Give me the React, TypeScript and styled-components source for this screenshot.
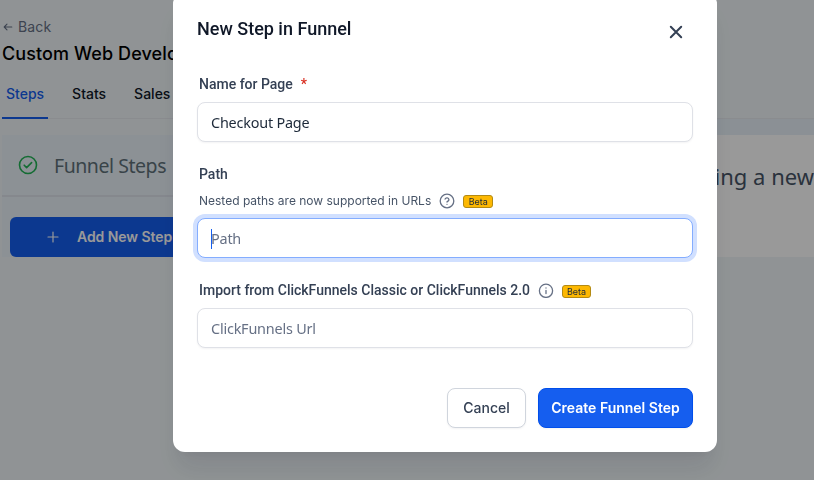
import React from "react";
import styled, { createGlobalStyle } from "styled-components";

const Global = createGlobalStyle`
  * { box-sizing: border-box; }
  html, body { margin: 0; height: 480px; overflow: hidden; background: #f0f7fa; }
  #root { height: 480px; }
`;

const Page = styled.div`
  height: 480px;
  display: flex;
  flex-direction: column;
  overflow: hidden;
  background: #f0f6f9;
  font-family: Inter, "Liberation Sans", sans-serif;
`;

const Header = styled.header`
  height: 119px;
  flex: none;
  padding: 17px 0 0 2px;
  display: flex;
  flex-direction: column;
`;

const Back = styled.a`
  height: 20px;
  display: flex;
  align-items: center;
  gap: 4px;
  color: #667085;
  font-size: 14px;
  line-height: 20px;
  letter-spacing: 0.15px;
`;

const FunnelName = styled.h1`
  margin: 3px 0 0;
  height: 28px;
  line-height: 28px;
  font-size: 18px;
  font-weight: 450;
  letter-spacing: 0.1px;
  white-space: nowrap;
  color: #000;
`;

const Tabs = styled.nav`
  margin-top: 13px;
  height: 38px;
  display: flex;
  gap: 20px;
  box-shadow: inset 0 -1px #e6e9ef;
`;

const Tab = styled.a<{ $active?: boolean }>`
  height: 38px;
  padding: 3px 4px 0;
  font-size: 14px;
  line-height: 20px;
  font-weight: 500;
  color: ${(p) => (p.$active ? "#155eef" : "#101828")};
  border-bottom: 2px solid ${(p) => (p.$active ? "#155eef" : "transparent")};
`;

const Workspace = styled.main`
  height: 138px;
  padding: 16px 0 0 2px;
  display: flex;
  gap: 12px;
  background: linear-gradient(90deg, #f0f6f9 50%, #e8f1f8 60%);
`;

const StepsPanel = styled.aside`
  width: 260px;
  height: 122px;
  background: #e9f2f9;
`;

const StepsTitle = styled.div`
  height: 62px;
  padding: 0 0 0 16px;
  display: flex;
  align-items: center;
  gap: 16px;
  border-bottom: 2px solid #dee3ec;
  color: #607179;
  font-family: "Noto Sans", sans-serif;
  font-size: 19.5px;
  letter-spacing: -0.45px;
  white-space: nowrap;
`;

const AddButton = styled.button`
  margin: 20px 0 0 8px;
  width: 244px;
  height: 40px;
  padding: 0 0 0 36px;
  display: flex;
  align-items: center;
  gap: 17px;
  border: 0;
  border-radius: 6px;
  background: #155eef;
  color: #fff;
  font: 600 14px/20px Inter, sans-serif;
  letter-spacing: -0.05px;
`;

const Canvas = styled.section`
  flex: 1;
  height: 122px;
  padding-top: 26px;
  overflow: hidden;
  display: flex;
  justify-content: flex-end;
  background: #fff;
  color: #475467;
  font: 22px/30px "Noto Sans", sans-serif;
  white-space: nowrap;
`;

const Scrim = styled.div`
  position: fixed;
  inset: 0;
  background: rgba(0, 0, 0, 0.4);
`;

const Dialog = styled.div`
  position: absolute;
  left: 173px;
  top: -8px;
  width: 544px;
  height: 460px;
  padding: 24px;
  display: flex;
  flex-direction: column;
  border-radius: 12px;
  background: #fff;
  color: #344054;
  font-family: Roboto, sans-serif;
  box-shadow: 0 20px 24px -4px rgba(16, 24, 40, 0.1), 0 8px 8px -4px rgba(16, 24, 40, 0.04);
`;

const DialogHead = styled.header`
  height: 48px;
  display: flex;
  justify-content: space-between;
`;

const DialogTitle = styled.h2`
  margin: 0;
  font-size: 18px;
  line-height: 26px;
  font-weight: 500;
  color: #101828;
`;

const CloseButton = styled.button`
  width: 34px;
  height: 32px;
  padding: 0;
  display: flex;
  align-items: center;
  justify-content: center;
  border: 0;
  background: none;
`;

const Label = styled.label<{ $top?: number }>`
  margin-top: ${(p) => p.$top ?? 0}px;
  height: 20px;
  padding-left: 2px;
  display: flex;
  align-items: center;
  gap: 8px;
  font-size: 14px;
  line-height: 20px;
  font-weight: 500;
  white-space: nowrap;
`;

const Required = styled.span`
  color: #d92d20;
`;

const Hint = styled.div`
  margin-top: 7px;
  height: 20px;
  padding-left: 2px;
  display: flex;
  align-items: center;
  gap: 8px;
  color: #475467;
  font: 12px/20px Inter, sans-serif;
  white-space: nowrap;
`;

const Beta = styled.span<{ $drop?: number }>`
  margin-top: ${(p) => p.$drop ?? 0}px;
  height: 13px;
  width: ${(p) => (p.$drop ? 29 : 30)}px;
  display: flex;
  align-items: center;
  justify-content: center;
  border: 1px solid #b38a14;
  border-radius: 3px;
  background: #fdb802;
  color: #1d2939;
  font: 9px/11px Inter, sans-serif;
`;

const Field = styled.div<{ $top: number; $focused?: boolean; $filled?: boolean }>`
  margin-top: ${(p) => p.$top}px;
  height: 40px;
  flex: none;
  padding: 1px 13px 0;
  display: flex;
  align-items: center;
  border: 1px solid ${(p) => (p.$focused ? "#84adff" : "#dfe1e7")};
  border-radius: 8px;
  background: #fff;
  box-shadow: ${(p) => (p.$focused ? "0 0 0 4px #d1e0ff" : "0 1px 2px rgba(16, 24, 40, 0.05)")};
  color: ${(p) => (p.$filled ? "#1d2939" : "#667085")};
  font: 14.4px/20px "Noto Sans", sans-serif;
  letter-spacing: -0.2px;
`;

const Caret = styled.span`
  width: 1px;
  height: 20px;
  margin-right: -1px;
  background: #155eef;
`;

const Actions = styled.footer`
  margin-top: 40px;
  display: flex;
  justify-content: flex-end;
  gap: 12px;
`;

const Action = styled.button<{ $primary?: boolean }>`
  width: ${(p) => (p.$primary ? 155 : 79)}px;
  height: 40px;
  padding: 0;
  border: 1px solid ${(p) => (p.$primary ? "#004eeb" : "#d0d5dd")};
  border-radius: 8px;
  background: ${(p) => (p.$primary ? "#155eef" : "#fff")};
  color: ${(p) => (p.$primary ? "#fff" : "#344054")};
  box-shadow: 0 1px 2px rgba(16, 24, 40, 0.05);
  font: ${(p) => (p.$primary ? 600 : 500)} 14px/20px Inter, sans-serif;
  white-space: nowrap;
`;

const HelpIcon = () => (
  <svg width="16" height="16" viewBox="0 0 16 16" fill="none" stroke="#667085" strokeWidth="1.3" strokeLinecap="round" strokeLinejoin="round">
    <circle cx="8" cy="8" r="6.8" />
    <path d="M6.1 6.1a2 2 0 0 1 3.8.6c0 1.3-1.9 1.8-1.9 2.3M8 11.3h.01" />
  </svg>
);

const InfoIcon = () => (
  <svg width="16" height="16" viewBox="0 0 16 16" fill="none" stroke="#667085" strokeWidth="1.3" strokeLinecap="round">
    <circle cx="8" cy="8.8" r="6.6" />
    <path d="M8 11.5V8.5M8 6h.01" />
  </svg>
);

export default function App() {
  return (
    <>
      <Global />
      <Page>
        <Header>
          <Back>
            <svg width="12" height="12" viewBox="0 0 12 12" fill="none" stroke="#667085" strokeWidth="1.1" strokeLinecap="round" strokeLinejoin="round">
              <path d="M9.8 6H2.2M5 3.2 2.2 6 5 8.8" />
            </svg>
            Back
          </Back>
          <FunnelName>Custom Web Development</FunnelName>
          <Tabs>
            <Tab $active>Steps</Tab>
            <Tab>Stats</Tab>
            <Tab>Sales</Tab>
          </Tabs>
        </Header>
        <Workspace>
          <StepsPanel>
            <StepsTitle>
              <svg width="20" height="20" viewBox="0 0 20 20" fill="none" stroke="#22b455" strokeWidth="1.6" strokeLinecap="round" strokeLinejoin="round">
                <circle cx="10" cy="10" r="8.5" />
                <path d="m6.2 10.2 2.4 2.4 5-5" />
              </svg>
              Funnel Steps
            </StepsTitle>
            <AddButton>
              <svg width="14" height="14" viewBox="0 0 14 14" fill="none" stroke="#fff" strokeWidth="1.2" strokeLinecap="round">
                <path d="M7 2v10M2 7h10" />
              </svg>
              Add New Step
            </AddButton>
          </StepsPanel>
          <Canvas>Start by adding a new</Canvas>
        </Workspace>
      </Page>
      <Scrim>
        <Dialog role="dialog">
          <DialogHead>
            <DialogTitle>New Step in Funnel</DialogTitle>
            <CloseButton aria-label="Close">
              <svg width="14" height="14" viewBox="0 0 14 14" fill="none" stroke="#344054" strokeWidth="2" strokeLinecap="round">
                <path d="m1.8 1.8 10.4 10.4M12.2 1.8 1.8 12.2" />
              </svg>
            </CloseButton>
          </DialogHead>
          <Label $top={10}>
            Name for Page <Required>*</Required>
          </Label>
          <Field $top={8} $filled>Checkout Page</Field>
          <Label $top={22}>Path</Label>
          <Hint>
            Nested paths are now supported in URLs
            <HelpIcon />
            <Beta>Beta</Beta>
          </Hint>
          <Field $top={7} $focused>
            <Caret />
            Path
          </Field>
          <Label $top={22}>
            Import from ClickFunnels Classic or ClickFunnels 2.0
            <InfoIcon />
            <Beta $drop={2}>Beta</Beta>
          </Label>
          <Field $top={8}>ClickFunnels Url</Field>
          <Actions>
            <Action>Cancel</Action>
            <Action $primary>Create Funnel Step</Action>
          </Actions>
        </Dialog>
      </Scrim>
    </>
  );
}
